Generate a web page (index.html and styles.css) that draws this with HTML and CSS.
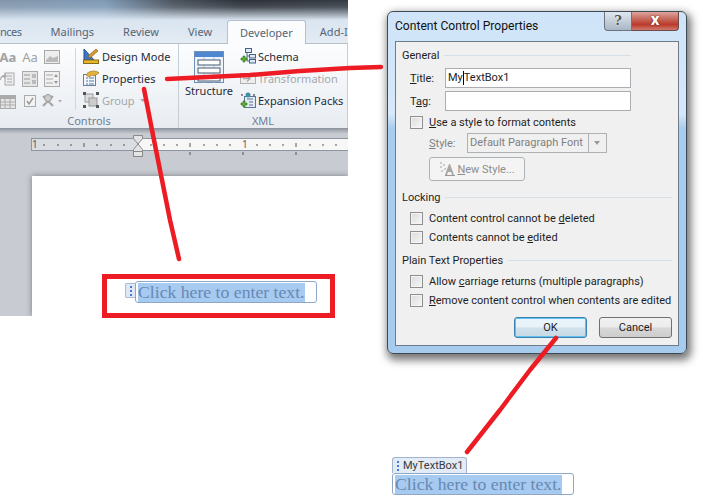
FILE: index.html
```html
<!DOCTYPE html>
<html>
<head>
    <title>Content Control Properties</title>
    <link rel="stylesheet" href="styles.css">
</head>
<body>
    <div class="word">
        <div class="titlebar"></div>
        <div class="tabs">
            <span class="tab tab-first">nces</span>
            <span class="tab">Mailings</span>
            <span class="tab">Review</span>
            <span class="tab">View</span>
            <span class="tab tab-active">Developer</span>
            <span class="tab tab-last">Add-I</span>
        </div>
        <div class="ribbon">
            <div class="group group-controls">
                <div class="controls-body">
                    <div class="mini-icons">
                        <span class="mini-aa bold">Aa</span>
                        <span class="mini-aa">Aa</span>
                        <svg width="16" height="16" viewBox="0 0 16 16"><rect x="0.5" y="1.5" width="15" height="13" fill="#eee" stroke="#a8a8a8"/><path d="M2 11l4-4 3 2 5-2v6H2z" fill="#bbb"/></svg>
                        <svg width="16" height="16" viewBox="0 0 16 16"><rect x="5" y="2" width="9" height="12" fill="#eee" stroke="#a8a8a8"/><path d="M7 5h5M7 8h5M7 11h5" stroke="#aaa"/><path d="M1 9a3 3 0 0 1 3-3v2l3-3-3-3v2a5 5 0 0 0-4 5z" fill="#aaa"/></svg>
                        <svg width="16" height="16" viewBox="0 0 16 16"><rect x="0.5" y="0.5" width="15" height="15" fill="#e6e6e6" stroke="#aaa"/><path d="M2 4h6M2 8h6M2 12h6" stroke="#999"/><path d="M10 3h4v4h-4zM10 9h4v4h-4z" fill="#bbb"/></svg>
                        <svg width="16" height="16" viewBox="0 0 16 16"><rect x="0.5" y="0.5" width="15" height="15" fill="#f0f0f0" stroke="#aaa"/><path d="M2 4h7M2 8h7M2 12h7" stroke="#aaa"/><path d="M10 6l2-3 2 3zM10 10l2 3 2-3z" fill="#999"/></svg>
                        <svg width="16" height="16" viewBox="0 0 16 16"><rect x="0.5" y="2.5" width="15" height="13" fill="#e6e6e6" stroke="#aaa"/><rect x="1" y="3" width="14" height="3" fill="#aaa"/><path d="M1 9h14M1 12h14M5 6v9M10 6v9" stroke="#aaa"/></svg>
                        <svg width="16" height="16" viewBox="0 0 16 16"><rect x="2.5" y="2.5" width="11" height="11" fill="#f3f3f3" stroke="#aaa"/><path d="M5 8l2 3 4-6" fill="none" stroke="#999" stroke-width="1.4"/></svg>
                        <svg width="22" height="16" viewBox="0 0 22 16"><path d="M2 3l10 10M12 3L2 13" stroke="#aaa" stroke-width="2.4"/><circle cx="7" cy="5" r="3.5" fill="#ccc" stroke="#999"/><path d="M17 7h4l-2 2.500z" fill="#aaa"/></svg>
                    </div>
                    <div class="divider"></div>
                    <div class="command-list">
                        <div class="command">
                            <svg width="16" height="16" viewBox="0 0 16 16"><path d="M1 1v11h10z" fill="#3c78c8" stroke="#234f8f"/><path d="M5 8l8-7 2 2-8 7z" fill="#d9962f" stroke="#8a5a14" stroke-width=".6"/><rect x="0.500" y="12" width="15" height="3.500" fill="#e8b730" stroke="#8a6a14"/></svg>
                            <span>Design Mode</span>
                        </div>
                        <div class="command">
                            <svg width="16" height="16" viewBox="0 0 16 16"><rect x="0.500" y="4.500" width="12" height="11" fill="#f4f7fb" stroke="#6c7f96"/><path d="M3 8h2M6 8h5M3 11h2M6 11h5M3 14h2M6 14h5" stroke="#4878b0"/><path d="M3 5c2-4 8-5 12-3l1 1-5 3-2-1-3 2z" fill="#e3b23c" stroke="#94701c" stroke-width=".6"/></svg>
                            <span>Properties</span>
                        </div>
                        <div class="command command-off">
                            <svg width="16" height="16" viewBox="0 0 16 16"><rect x="2" y="2" width="8" height="8" fill="#ddd" stroke="#999"/><rect x="6" y="6" width="8" height="8" fill="#ccc" stroke="#999"/><path d="M0 0h3v3H0zM13 0h3v3h-3zM0 13h3v3H0zM13 13h3v3h-3z" fill="#555"/></svg>
                            <span>Group</span>
                            <span class="drop"></span>
                        </div>
                    </div>
                </div>
                <div class="group-label">Controls</div>
            </div>
            <div class="group group-xml">
                <div class="xml-body">
                    <div class="structure">
                        <svg width="30" height="32" viewBox="0 0 30 32"><rect x="0.500" y="0.500" width="29" height="31" fill="#eef3fa" stroke="#6f8fb8"/><rect x="1" y="1" width="28" height="5" fill="#4f86d0"/><path d="M10 6v26M20 6v26" stroke="#b5c7de"/><rect x="4" y="9" width="22" height="5" fill="#fff" stroke="#44586f"/><rect x="4" y="17" width="22" height="5" fill="#fff" stroke="#44586f"/><rect x="4" y="25" width="22" height="5" fill="#fff" stroke="#44586f"/></svg>
                        <span>Structure</span>
                    </div>
                    <div class="command-list">
                        <div class="command">
                            <svg width="16" height="16" viewBox="0 0 16 16"><rect x="5.500" y="0.500" width="6" height="4" fill="#dfe9f5" stroke="#44628a"/><rect x="9.500" y="6.500" width="6" height="3.500" fill="#dfe9f5" stroke="#44628a"/><rect x="9.500" y="11.500" width="6" height="3.500" fill="#dfe9f5" stroke="#44628a"/><path d="M7 4v9h3M7 8h3" stroke="#44628a" fill="none"/><path d="M3 8h2v2h2v2H5v2H3v-2H1v-2h2z" fill="#5cae32" stroke="#2f6f17" stroke-width=".6"/></svg>
                            <span>Schema</span>
                        </div>
                        <div class="command command-off">
                            <svg width="16" height="16" viewBox="0 0 16 16"><rect x="0.500" y="3.500" width="15" height="10" fill="#eee" stroke="#b0b0b0"/><path d="M3 8.500h6M7 5.500l3 3-3 3" fill="none" stroke="#aaa" stroke-width="1.400"/></svg>
                            <span>Transformation</span>
                        </div>
                        <div class="command">
                            <svg width="16" height="16" viewBox="0 0 16 16"><rect x="4.500" y="4.500" width="11" height="11" fill="#e3ecf6" stroke="#5b7594"/><path d="M7 7h6M9 10h4M9 13h4" stroke="#5b7594"/><circle cx="8" cy="3" r="2.500" fill="#3f8fa8"/><path d="M3 3H1M13 3h2" stroke="#222"/><path d="M3 9h2v2h2v2H5v2H3v-2H1v-2h2z" fill="#5cae32" stroke="#2f6f17" stroke-width=".6"/></svg>
                            <span>Expansion Packs</span>
                        </div>
                    </div>
                </div>
                <div class="group-label">XML</div>
            </div>
        </div>
        <div class="ruler-band">
            <div class="ruler">
                <div class="ruler-margin"><span>1</span></div>
                <div class="ruler-text"><span>1</span></div>
                <svg class="ticks" width="317" height="18" viewBox="31 138 317 18"><path d="M44 144v2M58 144v2M71 144v2M84 143v4M97 144v2M111 144v2M124 144v2M151 144v2M164 144v2M177 144v2M204 144v2M217 144v2M230 144v2M257 144v2M270 144v2M283 144v2M310 144v2M323 144v2M336 144v2"/><path d="M190 143v4M296 143v4M190 152v3M243 152v3M296 152v3"/></svg>
                <svg class="indent" width="12" height="22" viewBox="0 0 12 22"><path d="M1.500 0.500h9v3L6 9 1.500 3.500z" fill="#e4e4e4" stroke="#888"/><path d="M6 9l4.500 5.500v2h-9v-2z" fill="#e4e4e4" stroke="#888"/><rect x="1.500" y="16.500" width="9" height="5" fill="#e4e4e4" stroke="#888"/></svg>
            </div>
        </div>
        <div class="doc-area">
            <div class="page">
                <div class="control control-word">
                    <span class="grip-tab"><i></i></span>
                    <div class="control-box"><span class="placeholder">Click here to enter text.</span></div>
                </div>
            </div>
        </div>
    </div>

    <div class="dialog">
        <div class="dialog-title">
            <span>Content Control Properties</span>
            <div class="caption-buttons">
                <span class="help">?</span>
                <span class="close">x</span>
            </div>
        </div>
        <div class="dialog-body">
            <div class="legend legend-general"><span>General</span></div>
            <div class="field-rows">
                <div class="field"><label><u>T</u>itle:</label><div class="textbox"><span>My</span><b class="caret"></b><span>TextBox1</span></div></div>
                <div class="field"><label>T<u>a</u>g:</label><div class="textbox"></div></div>
            </div>
            <div class="check check-style"><i></i><span><u>U</u>se a style to format contents</span></div>
            <div class="style-row">
                <label><u>S</u>tyle:</label>
                <div class="combo"><span>Default Paragraph Font</span><b></b></div>
            </div>
            <div class="new-style">
                <svg width="16" height="16" viewBox="0 0 16 16"><path d="M1 1h2v2H1zM4 3h2v2H4zM1 5h2v2H1zM5 7h2v2H5zM2 9h2v2H2z" fill="#ccc"/><path d="M6 14L10 3h1l4 11h-2l-1-3H9l-1 3z" fill="#a8a8a8"/><rect x="6" y="14" width="10" height="1" fill="#999"/></svg>
                <span><u>N</u>ew Style...</span>
            </div>
            <div class="legend legend-locking"><span>Locking</span></div>
            <div class="check-list">
                <div class="check"><i></i><span>Content control cannot be <u>d</u>eleted</span></div>
                <div class="check"><i></i><span>Contents cannot be <u>e</u>dited</span></div>
            </div>
            <div class="legend legend-plain"><span>Plain Text Properties</span></div>
            <div class="check-list">
                <div class="check"><i></i><span>Allow <u>c</u>arriage returns (multiple paragraphs)</span></div>
                <div class="check"><i></i><span><u>R</u>emove content control when contents are edited</span></div>
            </div>
            <div class="dialog-buttons">
                <span class="btn btn-default">OK</span>
                <span class="btn">Cancel</span>
            </div>
        </div>
    </div>

    <div class="control control-result">
        <div class="title-tab"><i></i><span>MyTextBox1</span></div>
        <div class="control-box"><span class="placeholder">Click here to enter text.</span></div>
    </div>

    <div class="red-box"></div>
    <svg class="arrows" width="703" height="503" viewBox="0 0 703 503">
        <path d="M167 79L250 75L300 71L350 68L381 67"/>
        <path d="M144 89L152 130L162 180L170 220L179 259"/>
        <path d="M556 338L530 370L500 410L467 452"/>
    </svg>
</body>
</html>
```

FILE: styles.css
```css
html, body {
    margin: 0;
    padding: 0;
}

body {
    position: relative;
    width: 703px;
    height: 503px;
    overflow: hidden;
    background-color: #fff;
    font-family: Roboto, sans-serif;
    font-size: 11px;
    color: #1e1e1e;
}

/* word window */
.word {
    position: absolute;
    top: 0;
    left: 0;
    width: 348px;
    height: 316px;
    overflow: hidden;
    display: flex;
    flex-direction: column;
    font-family: "Noto Sans", sans-serif;
    font-size: 11px;
    background-color: #c8ccd2;
}

.titlebar {
    height: 20px;
    background:
        linear-gradient(rgba(214, 227, 240, 0) 0, rgba(214, 227, 240, 0.15) 35%, #d9e5f1 100%),
        linear-gradient(90deg, #8295aa 0, #7f9ab6 30%, #4a525c 50%, #2c3037 70%, #353a42 100%);
}

.tabs {
    height: 24px;
    display: flex;
    gap: 29px;
    align-items: flex-end;
    background: linear-gradient(#d9e5f1, #e4ebf3);
    border-bottom: 1px solid #b8c0ca;
    box-sizing: border-box;
    white-space: nowrap;
}

.tab {
    height: 23px;
    line-height: 23px;
    color: #566476;
}

.tab-first {
    letter-spacing: -0.5px;
}

.tab-last {
    margin-left: -1px;
}

.tab-active {
    margin: 0 -14px;
    padding: 0 12px;
    background-color: #fbfcfd;
    border: 1px solid #b8c0ca;
    border-bottom: none;
    border-radius: 3px 3px 0 0;
    position: relative;
    top: 1px;
}

.ribbon {
    height: 85px;
    flex-shrink: 0;
    display: flex;
    background: linear-gradient(#fcfdfe, #e8ecf1);
    border-bottom: 1px solid #8e959e;
    box-sizing: border-box;
}

.group {
    display: flex;
    flex-direction: column;
    box-sizing: border-box;
    border-right: 1px solid #c6ced8;
}

.group-controls {
    width: 179px;
}

.group-xml {
    flex: 1;
    min-width: 0;
}

.group-label {
    height: 16px;
    line-height: 18px;
    text-align: center;
    color: #6d7f96;
}

.controls-body,
.xml-body {
    flex: 1;
    display: flex;
}

.mini-icons {
    margin-left: -3px;
    padding-top: 2px;
    display: grid;
    grid-template-columns: 22px 22px 22px;
    grid-auto-rows: 22px;
    justify-items: center;
    align-items: center;
    height: 66px;
}

.mini-aa {
    font-size: 13px;
    color: #a3a3a3;
}

.mini-aa.bold {
    font-weight: bold;
}

.divider {
    width: 1px;
    margin: 4px 7px 2px 12px;
    background-color: #d3d8df;
}

.command-list {
    display: flex;
    flex-direction: column;
    padding-top: 1px;
}

.command {
    height: 22px;
    display: flex;
    align-items: center;
    gap: 3px;
    white-space: nowrap;
    color: #1f2b3a;
}

.command-off {
    color: #a4a7ab;
}

.drop {
    width: 0;
    height: 0;
    margin-left: 2px;
    border: 3px solid transparent;
    border-top: 3px solid #a4a7ab;
    border-bottom: none;
}

.xml-body {
    gap: 4px;
}

.xml-body .command {
    gap: 2px;
}

.structure {
    width: 54px;
    margin-left: 3px;
    padding-top: 7px;
    display: flex;
    flex-direction: column;
    align-items: center;
    line-height: 15px;
    color: #1f2b3a;
}

.ruler-band {
    height: 47px;
    box-sizing: border-box;
    padding: 9px 0 0 31px;
    background: linear-gradient(#979da5 0, #c8ccd2 5px);
    flex-shrink: 0;
}

.ruler {
    position: relative;
    height: 13px;
    display: flex;
    font-size: 10px;
    line-height: 11px;
    color: #5c5c5c;
    border: 1px solid #8e95a0;
    border-right: none;
    box-sizing: border-box;
}

.ruler-margin {
    width: 106px;
    background-color: #dadde1;
}

.ruler-text {
    flex: 1;
    padding-left: 104px;
    background-color: #f7f7f7;
}

.ticks {
    position: absolute;
    left: -1px;
    top: -1px;
    overflow: visible;
}

.ticks path {
    fill: none;
    stroke: #555;
    stroke-width: 1;
}

.indent {
    position: absolute;
    left: 100px;
    top: -4px;
}

.doc-area {
    flex: 1;
    padding-left: 32px;
}

.page {
    height: 100%;
    background-color: #fff;
    position: relative;
    box-shadow: 0 0 6px rgba(0, 0, 0, 0.4);
}

/* content controls */
.control-box {
    box-sizing: border-box;
    border: 1px solid #8ea6c8;
    border-radius: 3px;
    background-color: #fff;
    padding-left: 2px;
    display: flex;
    align-items: center;
}

.placeholder {
    font-family: "Liberation Serif", serif;
    font-size: 17.7px;
    line-height: 19px;
    background-color: #a6caf0;
    color: #6888b4;
    white-space: nowrap;
}

.control-word {
    position: absolute;
    left: 93px;
    top: 105px;
    display: flex;
}

.control-word .control-box {
    width: 182px;
    height: 22px;
}

.grip-tab {
    width: 10px;
    height: 15px;
    margin-top: 2px;
    box-sizing: border-box;
    background-color: #dfe8f4;
    border: 1px solid #a9bcd6;
    border-right: none;
    border-radius: 2px 0 0 2px;
    display: flex;
    justify-content: center;
}

.grip-tab i,
.title-tab i {
    width: 2px;
    height: 10px;
    margin-top: 2px;
    background: repeating-linear-gradient(#3f7fd8 0, #3f7fd8 2px, transparent 2px, transparent 4px);
}

.control-result {
    position: absolute;
    left: 392px;
    top: 457px;
    width: 182px;
}

.control-result .control-box {
    height: 22px;
    padding-left: 2px;
}

.title-tab {
    width: 75px;
    height: 16px;
    box-sizing: border-box;
    display: flex;
    align-items: center;
    gap: 4px;
    padding-left: 4px;
    font-size: 11px;
    color: #3a3a3a;
    background-color: #e3ebf6;
    border: 1px solid #a0b4d0;
    border-bottom: none;
    border-radius: 3px 3px 0 0;
}

.title-tab i {
    margin-top: 0;
}

/* dialog */
.dialog {
    position: absolute;
    left: 387px;
    top: 11px;
    width: 300px;
    height: 343px;
    box-sizing: border-box;
    padding: 0 7px 7px;
    display: flex;
    flex-direction: column;
    background: linear-gradient(#cfe4f8 0, #d6e8fa 30%, #a9cdee 34%, #a6cbec 100%);
    border: 1px solid #3f4a55;
    border-radius: 6px;
    box-shadow: 2px 4px 9px 2px rgba(0, 0, 0, 0.55);
}

.dialog-title {
    height: 29px;
    flex-shrink: 0;
    display: flex;
    justify-content: space-between;
    line-height: 29px;
    font-size: 12.1px;
    color: #111;
}

.caption-buttons {
    display: flex;
    height: 19px;
    line-height: 17px;
    font-weight: bold;
    text-align: center;
}

.help {
    width: 28px;
    box-sizing: border-box;
    color: #555;
    font-family: "DejaVu Serif", serif;
    font-size: 13px;
    text-shadow: 0 0 2px #fff;
    background: linear-gradient(#dfe8f1, #a9b6c4);
    border: 1px solid #6c7480;
    border-top: none;
    border-radius: 0 0 0 4px;
}

.close {
    width: 47px;
    box-sizing: border-box;
    color: #fff;
    font-size: 17px;
    line-height: 14px;
    text-shadow: 0 0 2px #5a1a12;
    background: linear-gradient(#dda59c 0, #c2574a 50%, #bc3a2c 70%, #cf7b6f 100%);
    border: 1px solid #6c4a4a;
    border-top: none;
    border-left: none;
    border-radius: 0 0 4px 0;
}

.dialog-body {
    flex: 1;
    box-sizing: border-box;
    background-color: #f0f0f0;
    border: 1px solid #6d7b8a;
    padding: 4px 6px 0 6px;
    display: flex;
    flex-direction: column;
    white-space: nowrap;
}

.legend {
    height: 18px;
    flex-shrink: 0;
    box-sizing: border-box;
    padding-top: 1px;
    line-height: 17px;
    display: flex;
    align-items: center;
    gap: 5px;
}

.legend::after {
    content: "";
    flex: 1;
    height: 1px;
    background-color: #d5dfe5;
}

.legend-general {
    margin-right: 41px;
}

.legend-locking {
    margin-top: 7px;
}

.legend-plain {
    margin-top: 4px;
}

.field-rows {
    display: flex;
    flex-direction: column;
    gap: 3px;
    padding: 4px 41px 0 8px;
}

.field {
    display: flex;
    align-items: center;
}

.field label {
    width: 35px;
}

.textbox {
    flex: 1;
    height: 20px;
    box-sizing: border-box;
    padding: 0 2px;
    display: flex;
    align-items: center;
    line-height: 18px;
    background-color: #fff;
    border: 1px solid #abadb3;
}

.caret {
    width: 1px;
    height: 14px;
    background-color: #000;
}

.check {
    display: flex;
    align-items: center;
    gap: 6px;
    height: 19px;
    padding-left: 8px;
}

.check i {
    width: 13px;
    height: 13px;
    flex-shrink: 0;
    box-sizing: border-box;
    background: linear-gradient(135deg, #dcdcdc, #f6f6f6);
    border: 1px solid #8e8f8f;
    box-shadow: inset 0 0 0 1px #f4f4f4;
}

.check-style {
    margin-top: 2px;
}

.style-row {
    display: flex;
    align-items: center;
    padding-left: 27px;
    margin-top: 1px;
    color: #808080;
}

.style-row label {
    width: 38px;
}

.combo {
    width: 140px;
    height: 20px;
    box-sizing: border-box;
    padding-left: 2px;
    display: flex;
    align-items: center;
    justify-content: space-between;
    border: 1px solid #adb2b5;
    line-height: 18px;
}

.combo b {
    width: 18px;
    height: 18px;
    box-sizing: border-box;
    position: relative;
    background-color: #f0f0f0;
    border-left: 1px solid #adb2b5;
}

.combo b::after {
    content: "";
    position: absolute;
    left: 5px;
    top: 7px;
    border: 3px solid transparent;
    border-top: 4px solid #9a9a9a;
    border-bottom: none;
}

.new-style {
    width: 96px;
    height: 24px;
    flex-shrink: 0;
    margin: 4px 0 0 27px;
    box-sizing: border-box;
    display: flex;
    align-items: center;
    justify-content: center;
    gap: 2px;
    color: #8d8d8d;
    background-color: #f4f4f4;
    border: 1px solid #adb2b5;
    border-radius: 3px;
}

.check-list {
    padding-top: 3px;
}

.dialog-buttons {
    display: flex;
    justify-content: flex-end;
    gap: 12px;
    margin-top: 7px;
}

.btn {
    width: 73px;
    height: 21px;
    box-sizing: border-box;
    text-align: center;
    line-height: 20px;
    background: linear-gradient(#f2f2f2 0, #ebebeb 48%, #d8d8d8 52%, #cdcdcd 100%);
    border: 1px solid #707070;
    border-radius: 3px;
}

.btn-default {
    background: linear-gradient(#eaf6fd 0, #e6f2f8 48%, #d0e2ec 52%, #c6d9e4 100%);
    border-color: #3c7fb1;
    box-shadow: inset 0 0 0 1px #5fc3ee;
}

/* annotations */
.red-box {
    position: absolute;
    left: 102px;
    top: 274px;
    width: 233px;
    height: 44px;
    box-sizing: border-box;
    border: 5px solid #ed1c24;
}

.arrows {
    position: absolute;
    top: 0;
    left: 0;
    pointer-events: none;
}

.arrows path {
    fill: none;
    stroke: #ed1c24;
    stroke-width: 4.5;
    stroke-linecap: round;
    stroke-linejoin: round;
}
```
